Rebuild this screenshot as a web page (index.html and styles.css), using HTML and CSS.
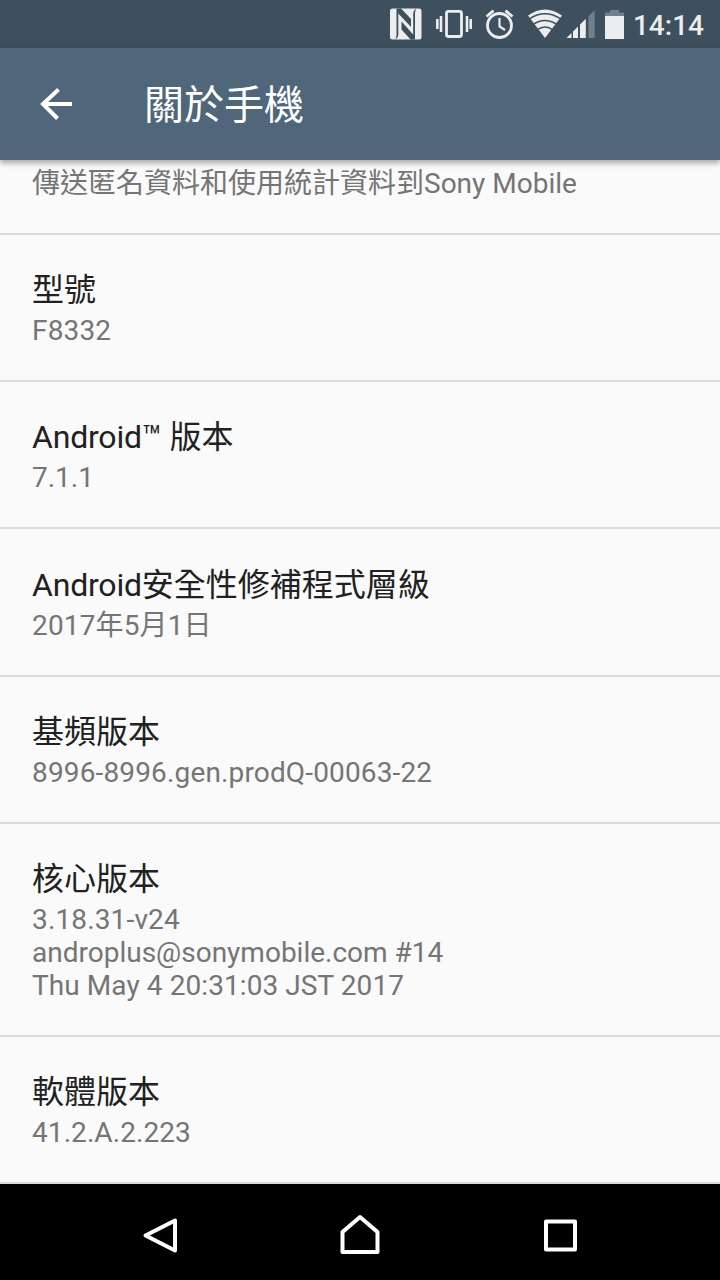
FILE: index.html
```html
<!DOCTYPE html>
<html lang="zh-TW">
<head>
<meta charset="utf-8">
<title>關於手機</title>
<link rel="stylesheet" href="styles.css">
</head>
<body>
<div class="screen">
  <header class="status">
    <svg class="status-icons" viewBox="384 0 244 48" width="244" height="48" fill="none" stroke="#ebedef">
      <rect x="390" y="8.500" width="31.500" height="31" rx="2.500" fill="#ebedef" stroke="none"/>
      <path d="M396.500 8.500H401L411 19V27L398.300 13.500V34Q398.300 38 395 39.500Q396.500 38 396.500 35Z" fill="#3e4f5e" stroke="none"/>
      <path d="M415 39.500H410.500L401.500 29.500V21.500L413.200 34.500V14Q413.200 10 416.500 8.500Q415 10 415 13Z" fill="#3e4f5e" stroke="none"/>
      <rect x="446.500" y="11.300" width="15" height="25.200" rx="2" stroke-width="2.800"/>
      <path d="M441 16v16M467 16v16M437.300 19v10M470.700 19v10" stroke-width="2.600"/>
      <circle cx="499.500" cy="25.500" r="12" stroke-width="2.800"/>
      <path d="M499.500 18v8.500l5.500 3.500" stroke-width="2.200"/>
      <path d="M486.500 16.500l7-5.800M512.500 16.500l-7-5.800" stroke-width="2.800"/>
      <path d="M545 38L528 15.500Q545 3.500 562 15.500Z" fill="#ebedef" stroke="none"/>
      <path d="M529 19.200Q545 8.500 561 19.200M533 24.500Q545 16.500 557 24.500M537 30Q545 24 553 30" stroke="#3e4f5e" stroke-width="1.500"/>
      <path d="M566.500 38l5-5v5zM573 38v-6.500l5-5V38zM580 38V24.500l5.800-5.800V38z" fill="#ebedef" stroke="none"/>
      <path d="M588.500 38V16.200l6.200-6.200V38z" fill="#71808c" stroke="none"/>
      <path d="M605 16v-3.500h5V10h9v2.500h5V16z" fill="#71808c" stroke="none"/>
      <path d="M605 16h19v23h-19z" fill="#ebedef" stroke="none"/>
    </svg>
    <time class="clock">14:14</time>
  </header>
  <div class="toolbar">
    <svg class="back" viewBox="0 0 32 32" width="32" height="32"><path d="M18.500 1.500L3 16l14.500 14.500M3 16h29" fill="none" stroke="#fff" stroke-width="4"/></svg>
    <h1 class="heading">關於手機</h1>
  </div>
  <main class="list">
    <section class="row row-clipped"><p class="summary">傳送匿名資料和使用統計資料到Sony Mobile</p></section>
    <section class="row"><h2 class="title">型號</h2><p class="summary numeric">F8332</p></section>
    <section class="row"><h2 class="title"><span class="latin">Android™</span> 版本</h2><p class="summary">7.1.1</p></section>
    <section class="row"><h2 class="title"><span class="latin">Android</span>安全性修補程式層級</h2><p class="summary numeric">2017年5月1日</p></section>
    <section class="row"><h2 class="title">基頻版本</h2><p class="summary numeric">8996-8996.gen.prodQ-00063-22</p></section>
    <section class="row"><h2 class="title">核心版本</h2><p class="summary"><span class="numeric">3.18.31-v24</span><br>androplus@sonymobile.com #14<br><span class="mixed">Thu May 4 20:31:03 JST 2017</span></p></section>
    <section class="row"><h2 class="title">軟體版本</h2><p class="summary mixed">41.2.A.2.223</p></section>
  </main>
  <nav class="nav">
    <svg class="nav-icon" viewBox="0 0 48 48" width="48" height="48"><path d="M39 8.500V38.500L9.500 23.500Z"/></svg>
    <svg class="nav-icon" viewBox="0 0 48 48" width="48" height="48"><path d="M6.500 40V20L24 5L41.500 20V40Z"/></svg>
    <svg class="nav-icon" viewBox="0 0 48 48" width="48" height="48"><path d="M10 9.500H39V37.500H10Z"/></svg>
  </nav>
</div>
</body>
</html>
```
FILE: styles.css
```css
body {
  margin: 0;
  font-family: Roboto, "Noto Sans CJK TC", sans-serif;
  background: #fafafa;
}

.screen {
  display: flex;
  flex-direction: column;
  width: 720px;
  height: 1280px;
  overflow: hidden;
}

.status {
  display: flex;
  flex: none;
  justify-content: flex-end;
  height: 48px;
  padding-right: 16px;
  background: #3e4f5e;
}

.status-icons {
  flex: none;
  margin-right: 5px;
}

.clock {
  color: #ebedef;
  font-size: 28px;
  font-weight: 500;
  line-height: 51px;
}

.toolbar {
  position: relative;
  display: flex;
  flex: none;
  align-items: center;
  box-sizing: border-box;
  height: 112px;
  padding-left: 40px;
  background: #50667a;
  box-shadow: 0 3px 6px rgba(0, 0, 0, 0.35);
}

.heading {
  margin: 4px 0 0 72px;
  color: #fff;
  font-size: 40px;
  font-weight: 400;
  line-height: 48px;
}

.list {
  flex: 1;
}

.row {
  padding: 36.200px 32px 33px;
  border-bottom: 2px solid #dcdcdc;
}

.row-clipped {
  padding-top: 7px;
}

.title {
  margin: 0 0 5px;
  color: #212121;
  font-size: 32px;
  font-weight: 400;
  line-height: 38px;
}

.latin {
  letter-spacing: -0.200px;
}

.summary {
  margin: 0;
  color: #757575;
  font-size: 28px;
  line-height: 33px;
}

.numeric {
  letter-spacing: 0.150px;
}

.mixed {
  letter-spacing: 0.080px;
}

.nav {
  display: flex;
  flex: none;
  gap: 152px;
  align-items: center;
  justify-content: center;
  box-sizing: border-box;
  height: 96px;
  padding-top: 8px;
  background: #000;
}

.nav-icon path {
  fill: none;
  stroke: #fff;
  stroke-width: 4;
  stroke-linejoin: round;
}
```
